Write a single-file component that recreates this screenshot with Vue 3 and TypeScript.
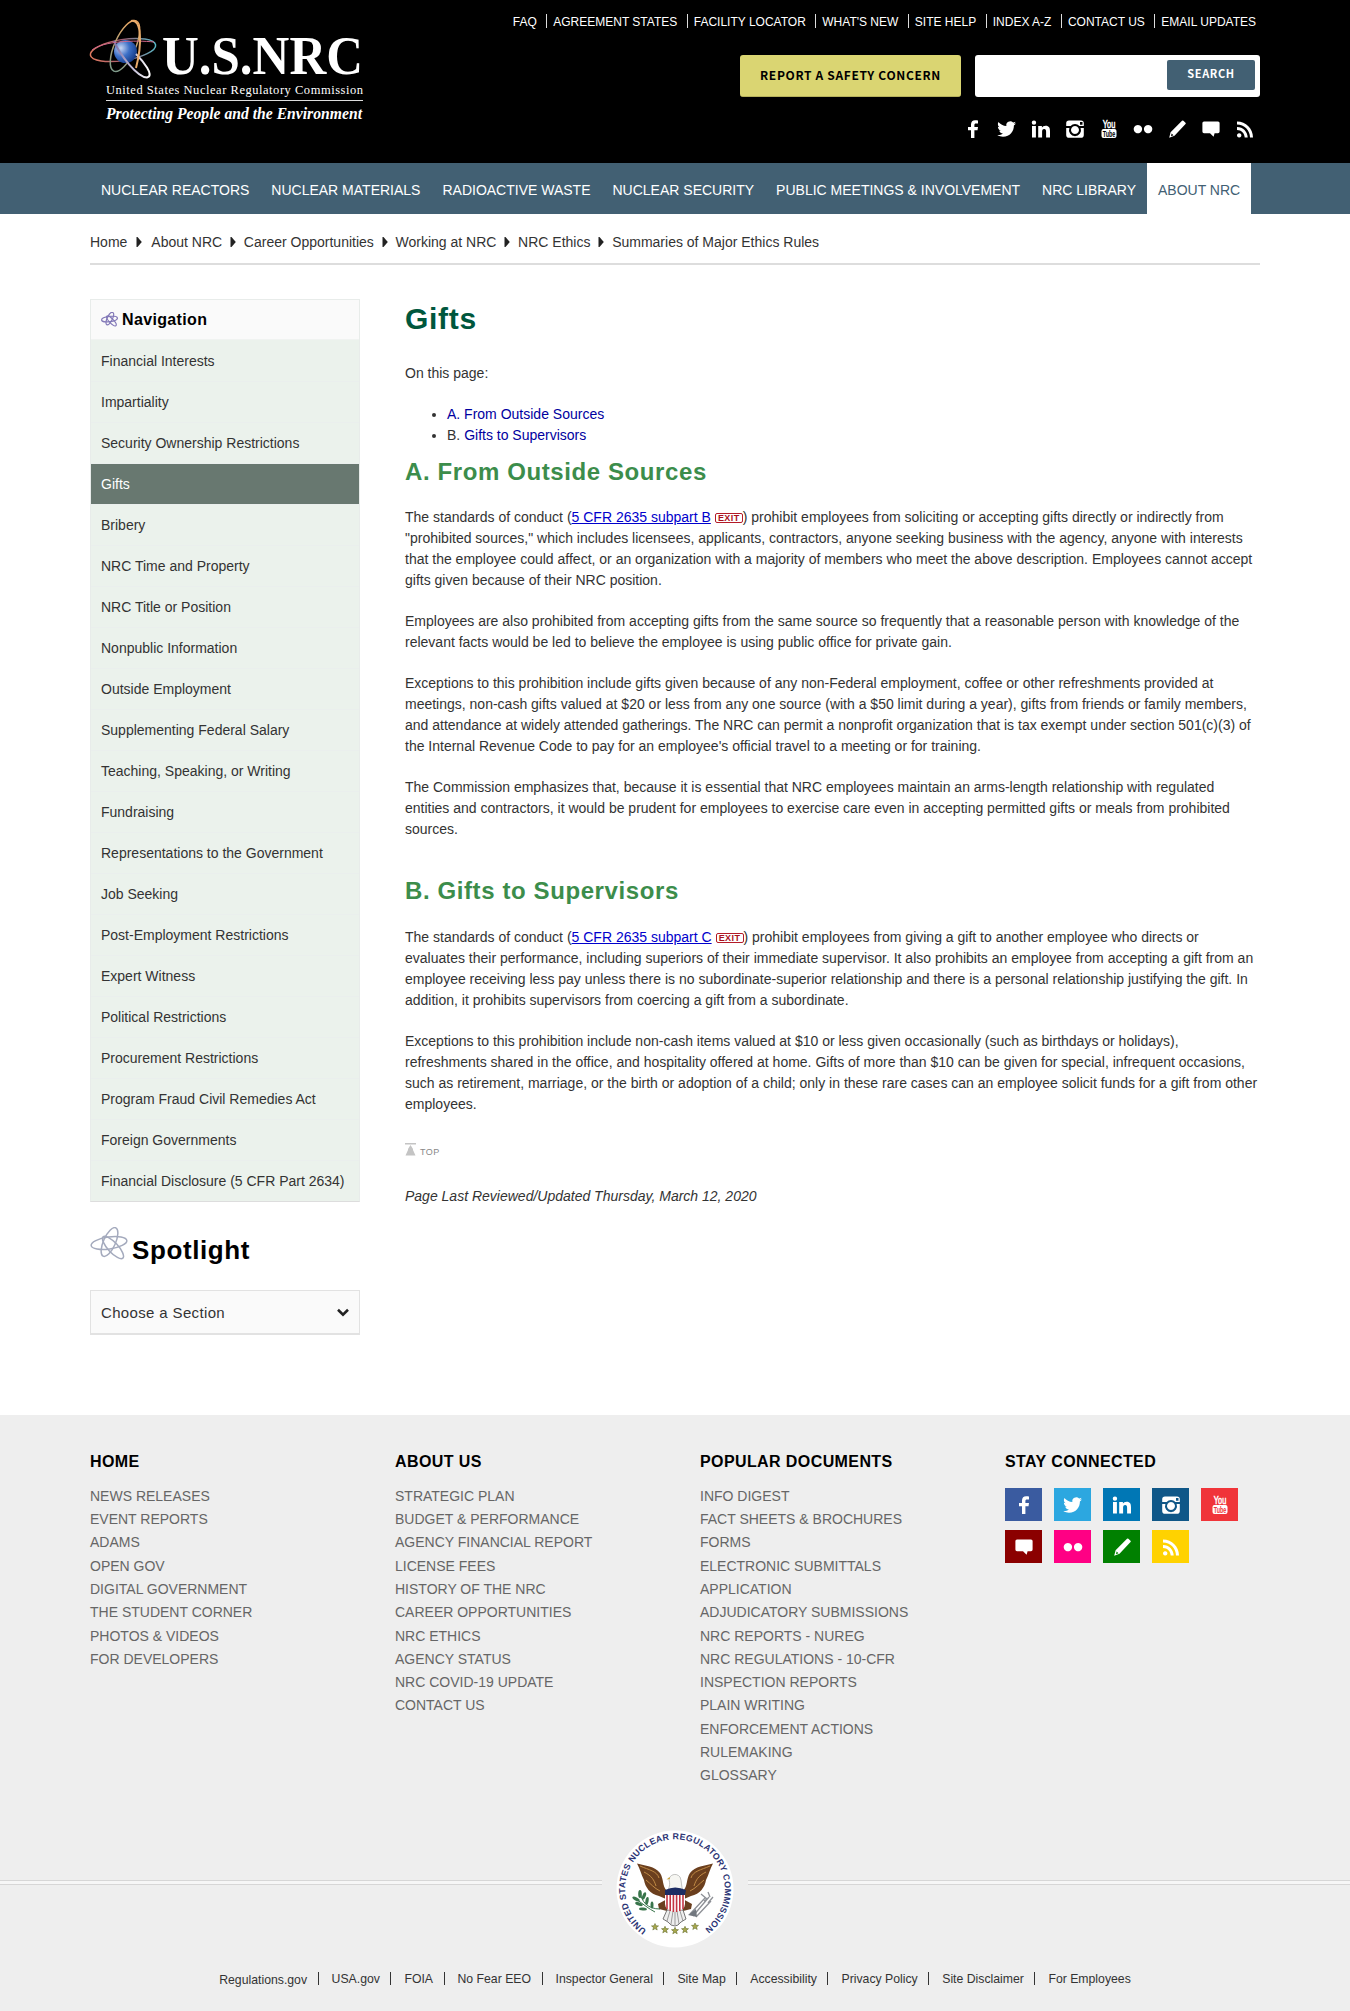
<script setup lang="ts">
import { defineComponent, h } from 'vue'

type IconName = 'facebook' | 'twitter' | 'linkedin' | 'instagram' | 'youtube' | 'flickr' | 'pencil' | 'chat' | 'rss'

const shapes: Record<IconName, { d: string; evenodd?: boolean }> = {
  facebook: { d: 'M8 19V11.2H5V8H8V5.6C8 2.7 9.6 1.3 12.1 1.3C13.5 1.3 14.6 1.4 15 1.5V4.5H13.1C11.7 4.5 11.4 5.2 11.4 6.2V8H15L14.5 11.2H11.4V19Z' },
  twitter: { d: 'M19 4.2C18.4 4.5 17.6 4.7 16.9 4.8C17.7 4.3 18.2 3.6 18.5 2.7C17.8 3.1 17 3.4 16.1 3.6A3.9 3.9 0 0 0 9.4 7.1C6.2 7 3.3 5.4 1.4 3.1C.4 5 .9 7.2 2.6 8.3C2 8.3 1.4 8.1 .9 7.8C.9 9.7 2.2 11.3 4 11.7C3.4 11.8 2.8 11.9 2.2 11.7C2.7 13.3 4.2 14.4 5.9 14.4C4.3 15.7 2.3 16.2 .3 16C2 17.1 4 17.7 6 17.7C13 17.7 17 12 16.9 6.4C17.7 5.8 18.4 5 19 4.2Z' },
  linkedin: { d: 'M1 7H4.9V18.5H1ZM3 1.4A2.2 2.2 0 1 1 2.9 5.8A2.2 2.2 0 0 1 3 1.4ZM7.2 7H10.9V8.6C11.5 7.5 12.9 6.7 14.6 6.7C18.2 6.7 19 9 19 12.2V18.5H15.1V12.9C15.1 11.4 14.9 10 13.2 10C11.5 10 11.1 11.3 11.1 12.8V18.5H7.2Z' },
  instagram: { evenodd: true, d: 'M4 1.5H16A2.8 2.8 0 0 1 18.8 4.3V15.9A2.8 2.8 0 0 1 16 18.7H4A2.8 2.8 0 0 1 1.2 15.9V4.3A2.8 2.8 0 0 1 4 1.5ZM15 3V5.7H17.5V3ZM1.2 7V9H4.4A6 6 0 1 0 15.6 9H18.8V7H14.4A6 6 0 0 0 5.6 7ZM10 7A4 4 0 1 1 9.99 7Z' },
  youtube: { d: 'M4.5 10H15.5A2 2 0 0 1 17.5 12V17A2 2 0 0 1 15.5 19H4.5A2 2 0 0 1 2.5 17V12A2 2 0 0 1 4.5 10Z' },
  flickr: { d: 'M4.9 5.9A4.2 4.2 0 1 1 4.89 5.9ZM15.1 5.9A4.2 4.2 0 1 1 15.09 5.9Z' },
  pencil: { evenodd: true, d: 'M15 1.8Q15.7 1.2 16.4 1.8L18.5 3.7Q19.2 4.4 18.5 5.1L7.5 16.7L2.2 18.8L3.6 13.3ZM4.6 14.6L4 17.2L6.5 16.3Z' },
  chat: { d: 'M3 2.5H17A1.6 1.6 0 0 1 18.6 4.1V12.6A1.6 1.6 0 0 1 17 14.2H13.6L12.6 17.8L9 14.2H3A1.6 1.6 0 0 1 1.4 12.6V4.1A1.6 1.6 0 0 1 3 2.5Z' },
  rss: { d: 'M2 2.6C11 2.6 18 9.6 18 18.6H15C15 11.3 9.3 5.6 2 5.6ZM2 7.9C8 7.9 12.7 12.6 12.7 18.6H9.7C9.7 14.3 6.3 10.9 2 10.9ZM4.2 14.2A2.2 2.2 0 1 1 4.19 14.2Z' }
}

const SocialIcon = defineComponent({
  props: { name: { type: String, required: true }, cut: { type: String, default: '#000' } },
  setup(props) {
    return () => {
      const s = shapes[props.name as IconName]
      const nodes = [h('path', { d: s.d, fill: '#fff', 'fill-rule': s.evenodd ? 'evenodd' : 'nonzero' })]
      if (props.name === 'youtube') {
        const base = { 'font-family': 'Liberation Sans Narrow, Liberation Sans, sans-serif', 'text-anchor': 'middle', x: 10, lengthAdjust: 'spacingAndGlyphs' }
        nodes.push(h('text', { ...base, y: 8.8, 'font-size': 11, textLength: 12.5, fill: '#fff', stroke: '#fff', 'stroke-width': 0.5 }, 'You'))
        nodes.push(h('text', { ...base, y: 17.7, 'font-size': 9, 'font-weight': 700, textLength: 12.5, fill: props.cut }, 'Tube'))
      }
      return h('svg', { viewBox: '0 0 20 20', width: 20, height: 20, style: 'display:block;overflow:visible' }, nodes)
    }
  }
})

const topLinks = ['FAQ', 'AGREEMENT STATES', 'FACILITY LOCATOR', "WHAT'S NEW", 'SITE HELP', 'INDEX A-Z', 'CONTACT US', 'EMAIL UPDATES']
const headerIcons: IconName[] = ['facebook', 'twitter', 'linkedin', 'instagram', 'youtube', 'flickr', 'pencil', 'chat', 'rss']
const mainNav = ['NUCLEAR REACTORS', 'NUCLEAR MATERIALS', 'RADIOACTIVE WASTE', 'NUCLEAR SECURITY', 'PUBLIC MEETINGS & INVOLVEMENT', 'NRC LIBRARY', 'ABOUT NRC']
const crumbs = ['Home', 'About NRC', 'Career Opportunities', 'Working at NRC', 'NRC Ethics', 'Summaries of Major Ethics Rules']
const sideNav = [
  'Financial Interests', 'Impartiality', 'Security Ownership Restrictions', 'Gifts', 'Bribery', 'NRC Time and Property',
  'NRC Title or Position', 'Nonpublic Information', 'Outside Employment', 'Supplementing Federal Salary',
  'Teaching, Speaking, or Writing', 'Fundraising', 'Representations to the Government', 'Job Seeking',
  'Post-Employment Restrictions', 'Expert Witness', 'Political Restrictions', 'Procurement Restrictions',
  'Program Fraud Civil Remedies Act', 'Foreign Governments', 'Financial Disclosure (5 CFR Part 2634)'
]
const footerColumns = [
  { title: 'HOME', links: ['NEWS RELEASES', 'EVENT REPORTS', 'ADAMS', 'OPEN GOV', 'DIGITAL GOVERNMENT', 'THE STUDENT CORNER', 'PHOTOS & VIDEOS', 'FOR DEVELOPERS'] },
  { title: 'ABOUT US', links: ['STRATEGIC PLAN', 'BUDGET & PERFORMANCE', 'AGENCY FINANCIAL REPORT', 'LICENSE FEES', 'HISTORY OF THE NRC', 'CAREER OPPORTUNITIES', 'NRC ETHICS', 'AGENCY STATUS', 'NRC COVID-19 UPDATE', 'CONTACT US'] },
  { title: 'POPULAR DOCUMENTS', links: ['INFO DIGEST', 'FACT SHEETS & BROCHURES', 'FORMS', 'ELECTRONIC SUBMITTALS', 'APPLICATION', 'ADJUDICATORY SUBMISSIONS', 'NRC REPORTS - NUREG', 'NRC REGULATIONS - 10-CFR', 'INSPECTION REPORTS', 'PLAIN WRITING', 'ENFORCEMENT ACTIONS', 'RULEMAKING', 'GLOSSARY'] }
]
const tiles: { name: IconName; color: string }[] = [
  { name: 'facebook', color: '#3a5ba0' }, { name: 'twitter', color: '#2ca7e0' }, { name: 'linkedin', color: '#0077b5' },
  { name: 'instagram', color: '#0f5788' }, { name: 'youtube', color: '#f03439' }, { name: 'chat', color: '#8b0000' },
  { name: 'flickr', color: '#ff0084' }, { name: 'pencil', color: '#008000' }, { name: 'rss', color: '#ffd200' }
]
const bottomLinks = ['Regulations.gov', 'USA.gov', 'FOIA', 'No Fear EEO', 'Inspector General', 'Site Map', 'Accessibility', 'Privacy Policy', 'Site Disclaimer', 'For Employees']
const stars = [[76, 127], [86, 129.8], [96, 130.8], [106, 129.8], [116, 126.5]]
</script>

<template>
  <div class="page">
    <header class="header">
      <div class="wrap header-in">
        <svg class="logo" width="320" height="140" viewBox="80 0 320 140">
          <defs>
            <radialGradient id="ball" cx=".3" cy=".35" r=".75">
              <stop offset="0" stop-color="#c9d6f2" /><stop offset=".5" stop-color="#3c6fc6" /><stop offset="1" stop-color="#143a86" />
            </radialGradient>
            <linearGradient id="orbA"><stop offset="0" stop-color="#e07a60" /><stop offset=".5" stop-color="#a05a70" /><stop offset="1" stop-color="#58b8c8" /></linearGradient>
            <linearGradient id="orbB"><stop offset="0" stop-color="#7d9a8a" /><stop offset="1" stop-color="#efa862" /></linearGradient>
            <linearGradient id="orbC"><stop offset="0" stop-color="#7c70a8" /><stop offset="1" stop-color="#fff" /></linearGradient>
          </defs>
          <g fill="none" stroke-width="1.500">
            <ellipse cx="123" cy="50" rx="33" ry="10.500" transform="rotate(-9 123 50)" stroke="url(#orbA)" />
            <ellipse cx="125" cy="46" rx="27.500" ry="10.500" transform="rotate(-66 125 46)" stroke="url(#orbB)" />
          </g>
          <circle cx="125.500" cy="51.500" r="11.500" fill="url(#ball)" />
          <g fill="none" stroke-width="2">
            <path d="M114 41C120 55 137 77 147 77.500C155 76 143 61 136 54" stroke="url(#orbC)" />
            <path d="M92 50C103 41 135 40 154 42" stroke="#d0688a" stroke-width="1" />
            <path d="M131 21C142 18 142 45 136 68" stroke="#e8aa6a" />
          </g>
          <g fill="#fff" font-family="Liberation Serif, serif">
            <text x="162" y="73.500" font-size="54" font-weight="700" textLength="201" lengthAdjust="spacingAndGlyphs">U.S.NRC</text>
            <text x="106" y="94" font-size="12.500" textLength="257" lengthAdjust="spacing">United States Nuclear Regulatory Commission</text>
            <text x="106" y="118.500" font-size="16.500" font-weight="700" font-style="italic" textLength="256" lengthAdjust="spacingAndGlyphs">Protecting People and the Environment</text>
          </g>
          <rect x="106" y="100" width="257" height="1" fill="#ddd" />
        </svg>
        <div class="header-right">
          <nav class="top-links"><a v-for="t in topLinks" :key="t">{{ t }}</a></nav>
          <div class="tools">
            <a class="report">REPORT A SAFETY CONCERN</a>
            <div class="search"><button>SEARCH</button></div>
          </div>
          <div class="header-icons"><SocialIcon v-for="i in headerIcons" :key="i" :name="i" /></div>
        </div>
      </div>
    </header>

    <nav class="main-nav">
      <div class="wrap nav-in"><a v-for="n in mainNav" :key="n" :class="{ active: n === 'ABOUT NRC' }">{{ n }}</a></div>
    </nav>

    <div class="wrap">
      <div class="crumbs">
        <template v-for="(c, i) in crumbs" :key="c">
          <span>{{ c }}</span>
          <svg v-if="i < crumbs.length - 1" width="6" height="10" viewBox="0 0 6 10" :class="{ first: i === 0 }"><path d="M.5 0H1.500L5.800 5L1.500 10H.5Z" fill="#222" /></svg>
        </template>
      </div>

      <div class="columns">
        <aside class="side">
          <div class="side-box">
            <div class="side-head">
              <svg width="17" height="15" viewBox="0 0 36 32" fill="none" stroke="#8379b8" stroke-width="2.600">
                <ellipse cx="18" cy="15" rx="17" ry="5.500" transform="rotate(-8 18 15)" />
                <ellipse cx="18.500" cy="14" rx="14.500" ry="5.500" transform="rotate(-64 18.500 14)" />
                <ellipse cx="22" cy="19" rx="14" ry="4.500" transform="rotate(46 22 19)" />
              </svg>
              <span>Navigation</span>
            </div>
            <a v-for="s in sideNav" :key="s" class="side-item" :class="{ on: s === 'Gifts' }">{{ s }}</a>
          </div>
          <h3 class="spotlight">
            <svg width="38" height="33" viewBox="0 0 38 33" fill="none" stroke="#a4aabd" stroke-width="1.500">
              <ellipse cx="19" cy="16" rx="18" ry="6" transform="rotate(-8 19 16)" />
              <ellipse cx="19.500" cy="15" rx="15.500" ry="6" transform="rotate(-66 19.500 15)" />
              <ellipse cx="23" cy="20.500" rx="14.500" ry="5" transform="rotate(47 23 20.500)" />
            </svg>
            <span>Spotlight</span>
          </h3>
          <div class="choose">
            <span>Choose a Section</span>
            <svg width="12" height="9" viewBox="0 0 12 9"><path d="M1 1.800L6 6.600L11 1.800" fill="none" stroke="#222" stroke-width="2.600" /></svg>
          </div>
        </aside>

        <main class="content">
          <h1>Gifts</h1>
          <p>On this page:</p>
          <ul>
            <li><a>A. From Outside Sources</a></li>
            <li>B. <a>Gifts to Supervisors</a></li>
          </ul>
          <h2>A. From Outside Sources</h2>
          <p>The standards of conduct (<a class="ul">5 CFR 2635 subpart B</a> <span class="exit">EXIT</span>) prohibit employees from soliciting or accepting gifts directly or indirectly from<br>"prohibited sources," which includes licensees, applicants, contractors, anyone seeking business with the agency, anyone with interests<br>that the employee could affect, or an organization with a majority of members who meet the above description. Employees cannot accept<br>gifts given because of their NRC position.</p>
          <p>Employees are also prohibited from accepting gifts from the same source so frequently that a reasonable person with knowledge of the<br>relevant facts would be led to believe the employee is using public office for private gain.</p>
          <p>Exceptions to this prohibition include gifts given because of any non-Federal employment, coffee or other refreshments provided at<br>meetings, non-cash gifts valued at $20 or less from any one source (with a $50 limit during a year), gifts from friends or family members,<br>and attendance at widely attended gatherings. The NRC can permit a nonprofit organization that is tax exempt under section 501(c)(3) of<br>the Internal Revenue Code to pay for an employee's official travel to a meeting or for training.</p>
          <p>The Commission emphasizes that, because it is essential that NRC employees maintain an arms-length relationship with regulated<br>entities and contractors, it would be prudent for employees to exercise care even in accepting permitted gifts or meals from prohibited<br>sources.</p>
          <h2 class="second">B. Gifts to Supervisors</h2>
          <p>The standards of conduct (<a class="ul">5 CFR 2635 subpart C</a> <span class="exit">EXIT</span>) prohibit employees from giving a gift to another employee who directs or<br>evaluates their performance, including superiors of their immediate supervisor. It also prohibits an employee from accepting a gift from an<br>employee receiving less pay unless there is no subordinate-superior relationship and there is a personal relationship justifying the gift. In<br>addition, it prohibits supervisors from coercing a gift from a subordinate.</p>
          <p>Exceptions to this prohibition include non-cash items valued at $10 or less given occasionally (such as birthdays or holidays),<br>refreshments shared in the office, and hospitality offered at home. Gifts of more than $10 can be given for special, infrequent occasions,<br>such as retirement, marriage, or the birth or adoption of a child; only in these rare cases can an employee solicit funds for a gift from other<br>employees.</p>
          <div class="to-top">
            <svg width="11" height="13" viewBox="0 0 11 13"><path d="M0 0H11V1.500H0ZM5.500 2L8 6V7L10.500 12.500H.5L3 7V6Z" fill="#c4c4c4" /></svg>
            <span>TOP</span>
          </div>
          <p class="updated">Page Last Reviewed/Updated Thursday, March 12, 2020</p>
        </main>
      </div>
    </div>

    <footer class="footer">
      <div class="wrap foot-cols">
        <section v-for="c in footerColumns" :key="c.title">
          <h4>{{ c.title }}</h4>
          <a v-for="l in c.links" :key="l">{{ l }}</a>
        </section>
        <section>
          <h4>STAY CONNECTED</h4>
          <div class="tiles">
            <span v-for="t in tiles" :key="t.name" class="tile" :style="{ background: t.color }"><SocialIcon :name="t.name" :cut="t.color" /></span>
          </div>
        </section>
      </div>
      <div class="seal-row">
        <i class="rule"></i>
        <svg width="122" height="122" viewBox="35 28 122 122">
          <defs><path id="ring" d="M67.500 130A49.800 49.800 0 1 1 124.500 130" /></defs>
          <circle cx="96" cy="89" r="58.500" fill="#fff" />
          <text font-family="Liberation Sans, sans-serif" font-weight="700" font-size="8.800" fill="#2c3474"><textPath href="#ring" textLength="250" lengthAdjust="spacing">UNITED STATES NUCLEAR REGULATORY COMMISSION</textPath></text>
          <g fill="#6b3f1e">
            <path d="M58 63.500C66 66 76 66 81 73C85 79 83 86 88 91L87 99L80 96C71 94 66 87 65 80C62 74 61 69 58 63.500Z" />
            <path d="M134 63.500C126 66 116 66 111 73C107 79 109 86 104 91L105 99L112 96C121 94 126 87 127 80C130 74 131 69 134 63.500Z" />
            <path d="M79 104L90 98L88 111L80 109ZM113 104L102 98L104 111L112 109Z" />
          </g>
          <g fill="none" stroke="#c08a45" stroke-width="1">
            <path d="M61 66C70 70 78 71 80 78M65 72C73 76 75 80 77 86M67 80C72 84 75 88 81 91M131 66C122 70 114 71 112 78M127 72C119 76 117 80 115 86M125 80C120 84 117 88 111 91" />
          </g>
          <path d="M88 110H104L107 119L102 122L99 125L96 126L92 125L89 122L84 119Z" fill="#eee" stroke="#555" stroke-width=".8" />
          <path d="M91 111L88 121M94 111L92 124M96 111V125M98 111L100 124M101 111L104 121" stroke="#777" stroke-width=".7" />
          <path d="M89 90C91 86 91 83 90 80C90 75 97 72 101 77C103 81 102 87 104 90Z" fill="#f6f6f2" stroke="#888" stroke-width=".5" />
          <path d="M90.500 77L87.500 79.500L91 79Z" fill="#caa53c" />
          <path d="M86 94H106V104Q106 110 96 112Q86 110 86 104Z" fill="#fff" />
          <path d="M88 94V109M91.200 94V111M94.400 94V112M97.600 94V112M100.800 94V111M104 94V109" stroke="#c33542" stroke-width="1.600" />
          <path d="M86 90Q96 85 107 90L106 95H86Z" fill="#1d2d63" />
          <path d="M61 91C62 102 69 109 81 109M57 99C64 104 70 109 76 112" fill="none" stroke="#39754b" stroke-width="1" />
          <g fill="#39754b">
            <ellipse cx="61" cy="94" rx="1.800" ry="4" /><ellipse cx="57" cy="99" rx="4" ry="1.700" transform="rotate(28 57 99)" /><ellipse cx="65" cy="96" rx="1.700" ry="4" transform="rotate(20 65 96)" />
            <ellipse cx="60" cy="104" rx="4" ry="1.600" transform="rotate(20 60 104)" /><ellipse cx="68" cy="101" rx="1.600" ry="4" transform="rotate(10 68 101)" /><ellipse cx="64" cy="109" rx="4" ry="1.500" transform="rotate(5 64 109)" />
            <ellipse cx="73" cy="105" rx="1.500" ry="3.500" />
          </g>
          <path d="M111 114L126 98M114 116L130 97M117 117L132 101M122 94L128 99L125 101M129 92L131 97M134 97L129 103" stroke="#8d9096" stroke-width="1.300" fill="none" />
          <path d="M109 115L117 109L118 117Z" fill="#71777e" />
          <path v-for="s in stars" :key="s[0]" :transform="`translate(${s[0]} ${s[1]})`" d="M0 -3.500L1 -1.200L3.500 -1.100L1.500 .5L2.200 3L0 1.600L-2.200 3L-1.500 .5L-3.500 -1.100L-1 -1.200Z" fill="#a8a84c" stroke="#687030" stroke-width=".6" />
        </svg>
        <i class="rule"></i>
      </div>
      <nav class="bottom-links"><a v-for="b in bottomLinks" :key="b">{{ b }}</a></nav>
    </footer>
  </div>
</template>

<style>
body { margin: 0; background: #fff; }
</style>

<style scoped>
.page { width: 1350px; height: 2011px; overflow: hidden; font: 14px/21px "Liberation Sans", Arial, sans-serif; color: #333; display: flex; flex-direction: column; }
.wrap { width: 1170px; margin: 0 auto; }
.header { height: 163px; background: #000; flex: none; }
.header-in { display: flex; justify-content: space-between; }
.logo { margin-left: -10px; display: block; flex: none; overflow: visible; }
.header-right { display: flex; flex-direction: column; align-items: flex-end; }
.top-links { display: flex; margin: 14px 4px 0 0; height: 14px; font-size: 12px; line-height: 16px; color: #fff; white-space: nowrap; }
.top-links a + a { border-left: 1px solid #ddd; margin-left: 9.500px; padding-left: 6px; }
.tools { display: flex; gap: 14px; margin-top: 27px; font-family: "Noto Sans CJK JP", sans-serif; font-weight: 700; }
.report { width: 221px; height: 42px; box-sizing: border-box; border-radius: 3px; background: #dad572; border-bottom: 1px solid #b5b05c; color: #000; font-size: 12px; line-height: 39px; letter-spacing: .65px; text-align: center; white-space: nowrap; }
.search { width: 285px; height: 42px; box-sizing: border-box; padding: 5px 5px 0; border-radius: 3px; background: #fff; display: flex; justify-content: flex-end; }
.search button { width: 88px; height: 30px; padding: 0 0 3px; border: 0; border-radius: 2px; background: #426073; color: #fff; font: 700 11px/27px "Noto Sans CJK JP", sans-serif; letter-spacing: .6px; }
.header-icons { display: flex; gap: 14px; margin: 22px 5px 0 0; }
.main-nav { height: 51px; background: #426073; flex: none; }
.nav-in { display: flex; }
.nav-in a { height: 51px; box-sizing: border-box; padding: 3px 11px 0; line-height: 49px; color: #fff; white-space: nowrap; }
.nav-in a.active { background: #fff; color: #426073; }
.crumbs { display: flex; align-items: center; box-sizing: border-box; padding-top: 7px; height: 51px; border-bottom: 2px solid #ddd; white-space: nowrap; }
.crumbs svg { margin: 0 8px 0 7.700px; }
.crumbs svg.first { margin: 0 9px; }
.columns { display: flex; }
.side { width: 270px; margin-top: 34px; flex: none; }
.side-box { border: 1px solid #e8ecea; border-bottom-color: #ddd; background: #ebf2ec; }
.side-head { height: 40px; box-sizing: border-box; display: flex; align-items: center; gap: 4px; padding: 0 0 1px 10px; background: #fafafa; border-bottom: 1px solid #f0f3f1; font-weight: 700; font-size: 16px; letter-spacing: .35px; color: #000; }
.side-item { display: block; height: 40px; padding-left: 10px; line-height: 42px; border-bottom: 1px solid #eaefed; white-space: nowrap; }
.side-item.on { background: #687870; color: #fff; }
.side-item:last-child { border-bottom: 0; }
.side-head { margin-bottom: 1px; }
.spotlight { display: flex; margin: 25px 0 0; height: 63px; gap: 4px; font-size: 26px; line-height: 46px; letter-spacing: .6px; color: #000; }
.side-item { line-height: 40px; }
.choose { display: flex; justify-content: space-between; align-items: center; height: 45px; box-sizing: border-box; padding: 0 10px; border: 1px solid #e2e2e2; border-bottom-width: 2px; background: #fafafa; font-size: 15px; letter-spacing: .35px; }
.content { margin-left: 45px; width: 865px; padding-top: 33px; white-space: nowrap; }
h1 { margin: 0 0 23px; font-size: 30px; line-height: 42px; letter-spacing: .7px; color: #00573d; }
h2 { margin: 9px 0 18px; font-size: 24px; line-height: 34px; letter-spacing: .6px; color: #3c8d4b; }
h2.second { margin: 34px 0 19px; }
p { margin: 0 0 20px; }
ul { margin: 0; padding-left: 42px; }
.content a { color: #0000a0; }
.content a.ul { color: #0000cc; text-decoration: underline; }
.exit { display: inline-block; box-sizing: border-box; width: 28px; height: 10px; border: 1px solid #b31b28; border-radius: 2px; font: 700 9px/8px "Liberation Sans", sans-serif; letter-spacing: .4px; text-align: center; color: #a8101c; vertical-align: 1px; }
.to-top { display: flex; gap: 4px; align-items: flex-start; height: 43px; margin-top: 28px; }
.to-top span { font-size: 9px; line-height: 18px; letter-spacing: .5px; color: #888; }
.updated { font-style: italic; margin: 0; }
.footer { margin-top: auto; height: 596px; background: #eee; flex: none; }
.foot-cols { display: grid; grid-template-columns: repeat(4, 305px); height: 372px; padding-top: 35px; box-sizing: border-box; width: 1170px; }
.foot-cols h4 { margin: 0 0 10.800px; font-size: 16px; line-height: 24px; letter-spacing: .4px; color: #000; }
.foot-cols a { display: block; line-height: 23.300px; color: #666; white-space: nowrap; }
.tiles { display: grid; grid-template-columns: repeat(5, 37px); gap: 9px 12px; margin-top: 14px; }
.tile { height: 33px; display: flex; align-items: center; justify-content: center; }
.seal-row { display: flex; justify-content: space-between; height: 122px; margin-top: 41px; }
.seal-row svg { display: block; }
.rule { width: 602px; height: 3px; margin-top: 52px; border: 1px solid #d6d6d6; border-width: 1px 0; background: #f6f6f6; }
.bottom-links { display: flex; justify-content: center; margin-top: 22px; font-size: 12.250px; line-height: 15px; white-space: nowrap; }
.bottom-links a { height: 13px; }
.bottom-links a:first-child { padding-top: 1px; }
.bottom-links a + a { border-left: 1px solid #333; margin-left: 10.500px; padding-left: 13px; }
</style>
